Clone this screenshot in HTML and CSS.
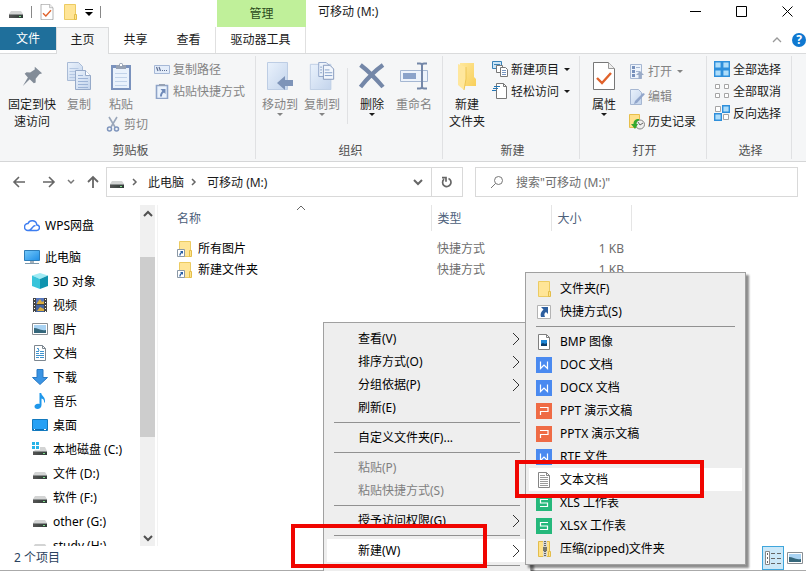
FILE: index.html
```html
<!DOCTYPE html>
<html lang="zh-CN">
<head>
<meta charset="UTF-8" />
<meta name="viewport" content="width=device-width, initial-scale=1" />
<title>可移动 (M:)</title>
<link rel="stylesheet" href="styles.css">
</head>
<body>

<!-- Ícones compartilhados -->
<svg class="sprite" aria-hidden="true">
  <defs>
    <linearGradient id="gPaper" x1="0" y1="0" x2="1" y2="1"><stop offset="0" stop-color="#eaf2fc"/><stop offset="1" stop-color="#c3d4ec"/></linearGradient>
    <linearGradient id="gFolder" x1="0" y1="0" x2="1" y2="1"><stop offset="0" stop-color="#ffe89b"/><stop offset="1" stop-color="#f8cf5a"/></linearGradient>
    <linearGradient id="gScreen" x1="0" y1="0" x2="1" y2="1"><stop offset="0" stop-color="#74c9fb"/><stop offset="1" stop-color="#1e8ee6"/></linearGradient>
    <linearGradient id="gDrive" x1="0" y1="0" x2="1" y2="0"><stop offset="0" stop-color="#555"/><stop offset="1" stop-color="#2f3a36"/></linearGradient>
  </defs>
  <symbol id="drive" viewBox="0 0 16 16">
    <path d="M3 7h10l2 3H1z" fill="#d3d4d4"/>
    <path d="M1 10h14v4H1z" fill="url(#gDrive)"/>
    <path d="M1 10h14v1H1z" fill="#8c9090"/>
    <path d="M11 12h2v1h-2z" fill="#7fe08c"/>
  </symbol>
  <symbol id="drive-c" viewBox="0 0 16 16">
    <path d="M0 1h3v3H0zM4 1h3v3H4zM0 5h3v3H0zM4 5h3v3H4z" fill="#28b4e8"/>
    <path d="M8 6h5l2 4H2l1-1h5z" fill="#d3d4d4"/>
    <path d="M1 10h14v4H1z" fill="url(#gDrive)"/>
    <path d="M1 10h14v1H1z" fill="#8c9090"/>
    <path d="M11 12h2v1h-2z" fill="#7fe08c"/>
  </symbol>
  <symbol id="folder" viewBox="0 0 16 16">
    <path d="M2.500.5h11v15h-11z" fill="#ffe597" stroke="#eccb62"/>
    <path d="M12.500 10.500h2v5h-2z" fill="#ffe48a" stroke="#e3bd4b"/>
  </symbol>
  <symbol id="folder-link" viewBox="0 0 16 16">
    <path d="M2.500.5h11v15h-11z" fill="#ffe597" stroke="#eccb62"/>
    <path d="M12.500 9.500h2v6h-2z" fill="#ffe48a" stroke="#e3bd4b"/>
    <path d="M.5 8.500h7v7h-7z" fill="#fff" stroke="#8b98a5"/>
    <path d="M3 10h3v3L5 12c-1 .6-1.400 1.200-1.400 2.500H2.300C2.300 13 3 12 4 11z" fill="#285fa5"/>
  </symbol>
  <symbol id="check-page" viewBox="0 0 22 28">
    <path d="M.5.500h15l6 6v21H.5z" fill="#fff" stroke="#777"/>
    <path d="M15.500.5v6h6" fill="#eee" stroke="#999"/>
    <path d="M4 16l5 5 9-10" fill="none" stroke="#e0622b" stroke-width="2.400"/>
  </symbol>
  <symbol id="pin" viewBox="0 0 24 24">
    <path d="M15 2l8 7-3 1-4 5v4l-2 1-4.500-4.500L2 23l5.500-9.500L4 9.500 6 8l4 .3L15 5z" fill="#828c98"/>
  </symbol>
  <symbol id="copy" viewBox="0 0 24 28">
    <path d="M.5.500h11l4 4v14H.5z" fill="url(#gPaper)" stroke="#a9bbd6"/>
    <path d="M2.500 6.500h9M2.500 9.500h9M2.500 12.500h9M2.500 15.500h9" stroke="#b5c8e3"/>
    <path d="M8.500 8.500h10l5 5v14h-15z" fill="url(#gPaper)" stroke="#96aac9"/>
    <path d="M18.500 8.500v5h5" fill="#fff" stroke="#96aac9"/>
    <path d="M11 13.500h5M11 16.500h10M11 19.500h10M11 22.500h10M11 25.500h10" stroke="#9db4d7"/>
  </symbol>
  <symbol id="paste" viewBox="0 0 20 28">
    <path d="M0 3h20v25H0z" fill="#7a92bd"/>
    <path d="M2 6h16v20H2z" fill="#eaf2fc"/>
    <path d="M4 11.500h12M4 15.500h12M4 19.500h12M4 23.500h12" stroke="#c2d3ea"/>
    <path d="M5 7V3h3a2 2 0 0 1 4 0h3v4z" fill="#97a2b4"/>
    <path d="M9 2h2v2H9z" fill="#fff"/>
  </symbol>
  <symbol id="cut" viewBox="0 0 16 16">
    <path d="M4 1l6 10M12 1L6 11" stroke="#9aa7ba" stroke-width="1.600" fill="none"/>
    <circle cx="4.500" cy="13" r="2" fill="none" stroke="#7f95bd" stroke-width="1.500"/>
    <circle cx="11.500" cy="13" r="2" fill="none" stroke="#7f95bd" stroke-width="1.500"/>
  </symbol>
  <symbol id="path" viewBox="0 0 16 16">
    <path d="M.5 4.500h15v8H.5z" fill="#e4edfa" stroke="#a6b8d6"/>
    <path d="M2.500 6l1.500 4M5 6l1.500 4" stroke="#5d6e92" stroke-width="1.200"/>
    <path d="M8 9h1v1H8zM10 9h1v1h-1zM12 9h1v1h-1z" fill="#5d6e92"/>
  </symbol>
  <symbol id="paste-link" viewBox="0 0 16 16">
    <path d="M2.500 2.500h11v13h-11z" fill="#eaf2fc" stroke="#8ea3c8" stroke-width="1.600"/>
    <path d="M5 3V1h6v2z" fill="#97a2b4"/>
    <path d="M6.500 6H11.500v5L10 9.500c-1.600.8-2 2-2 4H6C6 11 6.800 9.500 8.300 8z" fill="#6f89b7"/>
  </symbol>
  <symbol id="move-to" viewBox="0 0 28 28">
    <path d="M1.500.5h20v27h-20z" fill="url(#gPaper)" stroke="#bdcde4"/>
    <path d="M11 21l8-7v4h8v6h-8v4z" fill="#7e94b8"/>
  </symbol>
  <symbol id="copy-to" viewBox="0 0 28 30">
    <path d="M1.500 2.500h22v27h-22z" fill="url(#gPaper)" stroke="#bdcde4"/>
    <path d="M10.500.5h8l3 3v12h-11z" fill="#edf3fb" stroke="#8da3c7"/>
    <path d="M15.500 3.500h7l4 4v11h-11z" fill="#f2f6fc" stroke="#8196b9"/>
    <path d="M12 5.500h2M12 8.500h2M12 11.500h2M17 8.500h5M17 11.500h8M17 14.500h8" stroke="#829dc7"/>
  </symbol>
  <symbol id="delete" viewBox="0 0 28 28">
    <path d="M2.500 3C9 8 19 18 25 25M25 3C18 8 8 18 2.500 25" stroke="#7487a8" stroke-width="4.200" fill="none"/>
  </symbol>
  <symbol id="rename" viewBox="0 0 28 28">
    <path d="M.5 8.500h27v11H.5z" fill="#edf3fb" stroke="#a5b7d2"/>
    <path d="M3 11h13v6H3z" fill="#8ba3ca"/>
    <path d="M17 1.500h3q2 0 2 2v21q0 2-2 2h-3M27 1.500h-3q-2 0-2 2v21q0 2 2 2h3" fill="none" stroke="#7487a8" stroke-width="2"/>
  </symbol>
  <symbol id="new-folder" viewBox="0 0 20 28">
    <path d="M3 1h14v14l2 2v7H3z" fill="url(#gFolder)"/>
    <path d="M1 2l8 3v12l-2 11-6-5z" fill="#ffe79d"/>
    <path d="M9 5v12l-2 11" fill="none" stroke="#edc655"/>
  </symbol>
  <symbol id="new-item" viewBox="0 0 16 16">
    <path d="M.5.500h9v7h-9z" fill="#cbe6f8" stroke="#3a83b8"/>
    <path d="M2 3h6v1H2z" fill="#3a83b8"/>
    <path d="M4.500 4.500h6v7h-6z" fill="#fff" stroke="#777"/>
    <path d="M8.500 6.500h5l2 2v7h-7z" fill="#fff" stroke="#777"/>
    <path d="M10 9.500h4M10 11.500h4M10 13.500h4" stroke="#7795c0"/>
  </symbol>
  <symbol id="easy" viewBox="0 0 16 16">
    <path d="M4.500.5h7l3 3v12h-10z" fill="#fff" stroke="#777"/>
    <path d="M11.500.5v3h3" fill="none" stroke="#777"/>
    <path d="M2 3.500h6M1 5.500h5M0 7.500h4" stroke="#2577b5"/>
  </symbol>
  <symbol id="open" viewBox="0 0 16 16">
    <path d="M1.500.5h11v14h-11z" fill="#edf3fb" stroke="#a6b7d2"/>
    <path d="M3 2h3v3H3zM3 6h3v3H3zM3 10h3v3H3z" fill="#7790bb"/>
    <path d="M7 3.500h4M7 7.500h4" stroke="#a6b7d2"/>
    <path d="M11 7l4 4h-2.500v4h-3v-4H7z" fill="#9aabc8"/>
  </symbol>
  <symbol id="edit" viewBox="0 0 16 16">
    <path d="M1.500.5h8l3 3v12h-11z" fill="url(#gPaper)" stroke="#a6b7d2"/>
    <path d="M14 4l2 1-8 9-3 1 1-3z" fill="#91a6cb"/>
  </symbol>
  <symbol id="history" viewBox="0 0 16 16">
    <path d="M.5.500h10v13H.5z" fill="#ffe08a" stroke="#e7bf4b"/>
    <circle cx="11" cy="10.500" r="4.500" fill="#eee" stroke="#858585"/>
    <path d="M9 8l2 3 3-2" fill="none" stroke="#666"/>
    <path d="M10 5C6 5 4.500 7 4.500 10H2l4 5 3-5H7.500c0-2 .7-3 2.500-3.500z" fill="#35a82f"/>
  </symbol>
  <symbol id="sel-all" viewBox="0 0 16 16">
    <path d="M.7.700h6.600v6.600H.7zM8.700.700h6.600v6.600H8.700zM.7 8.700h6.600v6.600H.7zM8.700 8.700h6.600v6.600H8.700z" fill="#aeddfa" stroke="#2e8fdb" stroke-width="1.400"/>
  </symbol>
  <symbol id="sel-none" viewBox="0 0 16 16">
    <path d="M1.500 1.500h4v4h-4zM10.500 1.500h4v4h-4zM1.500 10.500h4v4h-4zM10.500 10.500h4v4h-4z" fill="#fff" stroke="#a5a5a5"/>
  </symbol>
  <symbol id="sel-inv" viewBox="0 0 16 16">
    <path d="M1.500 1.500h5v5h-5zM9.500 9.500h5v5h-5z" fill="#fff" stroke="#a5a5a5"/>
    <path d="M8.700.700h6.600v6.600H8.700zM.7 8.700h6.600v6.600H.7z" fill="#aeddfa" stroke="#2e8fdb" stroke-width="1.400"/>
  </symbol>
  <symbol id="cloud" viewBox="0 0 16 16">
    <path d="M4 13.500h8.500a2.800 2.800 0 0 0 .3-5.600A4.600 4.600 0 0 0 4 6.500a3.500 3.500 0 0 0 0 7c2 0 3-1 4-2.500s1.600-2.500 3.500-2.500" fill="none" stroke="#3d7df0" stroke-width="1.500"/>
  </symbol>
  <symbol id="pc" viewBox="0 0 16 16">
    <path d="M.5 1.500h15v10H.5z" fill="url(#gScreen)" stroke="#2d7db8"/>
    <path d="M6 12h4v2H6z" fill="#a5b1ba"/><path d="M1 14h14v1H1z" fill="#7c98ac"/>
  </symbol>
  <symbol id="cube" viewBox="0 0 16 16">
    <path d="M8 0l8 2.500L8 6 0 2.500z" fill="#a1ebf4"/>
    <path d="M0 2.500L8 6v10l-8-3z" fill="#38c4da"/>
    <path d="M16 2.500L8 6v10l8-3z" fill="#0f93ae"/>
  </symbol>
  <symbol id="video" viewBox="0 0 16 16">
    <path d="M1 1h14v14H1z" fill="#444"/>
    <path d="M4 1h8v6H4z" fill="#5776bd"/><path d="M4 8h8v7H4z" fill="#43639f"/>
    <path d="M5 6l3-4 2 3 2-1v3H5zM5 14l3-4 4 2v2z" fill="#d8ab3e"/>
    <path d="M2.500 2v13M13.500 2v13" stroke="#fff" stroke-dasharray="1 2"/>
  </symbol>
  <symbol id="picture" viewBox="0 0 16 16">
    <path d="M.5 2.500h15v11H.5z" fill="#fff" stroke="#8a8f94"/>
    <path d="M2 4h12v8H2z" fill="#a9d3f3"/>
    <path d="M2 7c4 0 6 3 12 2v3H2z" fill="#35677b"/>
  </symbol>
  <symbol id="doc" viewBox="0 0 16 16">
    <path d="M2.500.5h8l3 3v12h-11z" fill="#fff" stroke="#7d8790"/>
    <path d="M10.500.5v3h3" fill="none" stroke="#7d8790"/>
    <path d="M4 6.500h3M4 8.500h3M8 6.500h4M8 8.500h4M4 10.500h8M4 12.500h3M8 12.500h4" stroke="#3e93ce"/>
    <path d="M5 4l1-1 1 3" stroke="#3e93ce" fill="none"/>
  </symbol>
  <symbol id="down" viewBox="0 0 16 16">
    <path d="M5 .5h6v8h4.500L8 15.500.5 8.500H5z" fill="#3a94e4" stroke="#2979c4"/>
  </symbol>
  <symbol id="music" viewBox="0 0 16 16">
    <path d="M7.500 0h1.700c.3 3 4.300 4 3.800 8.500-.1.700-.7 1.500-1 1.500.3-3-.5-4-2.500-4.500V12c0 2.500-2 4-4 4s-3-1-3-2.500S4.500 10 7.500 11z" fill="#1f97ea"/>
  </symbol>
  <symbol id="desktop" viewBox="0 0 16 16">
    <path d="M.5 2.500h15v11H.5z" fill="#27a1f5" stroke="#1379be"/>
    <path d="M1 12.500h14" stroke="#0b6db5"/><path d="M2 12h1v1H2zM12 12h2v1h-2z" fill="#fff"/>
  </symbol>
  <symbol id="shortcut" viewBox="0 0 16 16">
    <path d="M1.500 1.500h13v13h-13z" fill="#fff" stroke="#b3b3b3"/>
    <path d="M5 3h7v7l-2-2c-2 1-2 3-1 5H5c-1-3 0-5 2.500-7.500z" fill="#2d5f9f"/>
  </symbol>
  <symbol id="bmp" viewBox="0 0 16 16">
    <path d="M2.500.5h8l3 3v12h-11z" fill="#fff" stroke="#7f7f7f"/>
    <path d="M10.500.5v3h3" fill="none" stroke="#7f7f7f"/>
    <path d="M5 6h6v6H5z" fill="#1f86d5"/><path d="M5 10l2-1 2 1 2-1v3H5z" fill="#0c3e6c"/>
  </symbol>
  <symbol id="wps-w" viewBox="0 0 16 16">
    <path d="M0 0h16v16H0z" fill="#4a8af0"/>
    <path d="M4.500 4.500v7L8 8l3.500 3.500v-7" fill="none" stroke="#fff" stroke-width="1.200"/>
  </symbol>
  <symbol id="wps-p" viewBox="0 0 16 16">
    <path d="M0 0h16v16H0z" fill="#ef6b45"/>
    <path d="M4 4.500h8v4H4.500v3.500" fill="none" stroke="#fff" stroke-width="1.200"/>
  </symbol>
  <symbol id="wps-s" viewBox="0 0 16 16">
    <path d="M0 0h16v16H0z" fill="#25b87b"/>
    <path d="M12 4.500H4.500V8h7v3.500H4" fill="none" stroke="#fff" stroke-width="1.200"/>
  </symbol>
  <symbol id="txt" viewBox="0 0 16 16">
    <path d="M2.500.5h8l3 3v12h-11z" fill="#fff" stroke="#858585"/>
    <path d="M10.500.5v3h3" fill="none" stroke="#858585"/>
    <path d="M4 3.500h5M4 5.500h8M4 7.500h8M4 9.500h8M4 11.500h8M4 13.500h8" stroke="#9a9a9a"/>
  </symbol>
  <symbol id="zip" viewBox="0 0 16 16">
    <path d="M2.500.5h11v15h-11z" fill="#ffe28c" stroke="#e3bd4b"/>
    <path d="M12.500 10.500h2v5h-2z" fill="#ffe48a" stroke="#e3bd4b"/>
    <path d="M7 0h4v16H7z" fill="#d7d7d2"/>
    <path d="M9 0v16" stroke="#666" stroke-width="2" stroke-dasharray="1 1"/>
    <path d="M7 6h4v4H7z" fill="#77776d"/>
  </symbol>
  <symbol id="more" viewBox="0 0 8 14"><path d="M1 1l6 6-6 6" fill="none" stroke="#333"/></symbol>
  <symbol id="chev-down" viewBox="0 0 10 10"><path d="M1 3l4 4 4-4" fill="none" stroke="currentColor" stroke-width="2"/></symbol>
  <symbol id="chev-up" viewBox="0 0 10 10"><path d="M1 7l4-4 4 4" fill="none" stroke="currentColor" stroke-width="2"/></symbol>
  <symbol id="chev-right" viewBox="0 0 10 10"><path d="M3 2l3 3-3 3" fill="none" stroke="#666" stroke-width="1.500"/></symbol>
</svg>

<div class="window">
  <!-- Barra de título -->
  <header class="titlebar">
    <div class="quick">
      <svg class="icon"><use href="#drive"/></svg>
      <span class="quick-sep"></span>
      <button class="bare" aria-label="属性"><svg class="icon"><use href="#check-page"/></svg></button>
      <button class="bare" aria-label="新建文件夹"><svg class="icon"><use href="#folder"/></svg></button>
      <button class="bare" aria-label="自定义快速访问工具栏"><svg class="quick-drop" viewBox="0 0 8 8"><path d="M0 1.500h8" stroke="#000"/><path d="M0 4h8L4 8z"/></svg></button>
      <span class="quick-sep"></span>
    </div>
    <div class="manage">管理</div>
    <div class="title">可移动 (M:)</div>
    <div class="controls">
      <button class="bare" aria-label="最小化"><svg class="ctl" viewBox="0 0 11 11"><path d="M0 5.500h11" stroke="#000"/></svg></button>
      <button class="bare" aria-label="最大化"><svg class="ctl" viewBox="0 0 11 11"><path d="M.5.500h10v10H.5z" fill="none" stroke="#000"/></svg></button>
      <button class="bare" aria-label="关闭"><svg class="ctl" viewBox="0 0 11 11"><path d="M.5.500l10 10M10.500.5l-10 10" stroke="#000"/></svg></button>
    </div>
  </header>

  <nav class="tabs">
    <button class="tab tab-file">文件</button>
    <button class="tab active">主页</button>
    <button class="tab">共享</button>
    <button class="tab">查看</button>
    <button class="tab tab-drive">驱动器工具</button>
    <div class="tabs-right">
      <button class="bare collapse" aria-label="折叠"><svg class="chev" viewBox="0 0 10 10"><path d="M1 7l4-4 4 4" fill="none" stroke="#999" stroke-width="1.300"/></svg></button>
      <button class="help" aria-label="帮助">?</button>
    </div>
  </nav>

  <!-- Faixa de opções -->
  <section class="ribbon">
    <div class="group group-clip">
      <div class="group-body">
        <button class="big pin"><svg class="big-icon"><use href="#pin"/></svg><span>固定到快<br>速访问</span></button>
        <button class="big off"><svg class="big-icon"><use href="#copy"/></svg>复制</button>
        <div class="paste-col">
          <button class="big off"><svg class="big-icon"><use href="#paste"/></svg>粘贴</button>
          <button class="small off"><svg class="icon"><use href="#cut"/></svg>剪切</button>
        </div>
        <div class="stack">
          <button class="small off"><svg class="icon"><use href="#path"/></svg>复制路径</button>
          <button class="small off"><svg class="icon"><use href="#paste-link"/></svg>粘贴快捷方式</button>
        </div>
      </div>
      <div class="group-name">剪贴板</div>
    </div>
    <div class="group group-org">
      <div class="group-body">
        <button class="big off"><svg class="big-icon"><use href="#move-to"/></svg>移动到<span class="drop"></span></button>
        <button class="big off"><svg class="big-icon"><use href="#copy-to"/></svg>复制到<span class="drop"></span></button>
        <span class="inner-sep"></span>
        <button class="big"><svg class="big-icon"><use href="#delete"/></svg>删除<span class="drop"></span></button>
        <button class="big off"><svg class="big-icon"><use href="#rename"/></svg>重命名</button>
      </div>
      <div class="group-name">组织</div>
    </div>
    <div class="group group-new">
      <div class="group-body">
        <button class="big"><svg class="big-icon"><use href="#new-folder"/></svg><span>新建<br>文件夹</span></button>
        <div class="stack">
          <button class="small"><svg class="icon"><use href="#new-item"/></svg>新建项目<span class="drop"></span></button>
          <button class="small"><svg class="icon"><use href="#easy"/></svg>轻松访问<span class="drop"></span></button>
        </div>
      </div>
      <div class="group-name">新建</div>
    </div>
    <div class="group group-open">
      <div class="group-body">
        <button class="big"><svg class="big-icon"><use href="#check-page"/></svg>属性<span class="drop"></span></button>
        <div class="stack loose">
          <button class="small off"><svg class="icon"><use href="#open"/></svg>打开<span class="drop"></span></button>
          <button class="small off"><svg class="icon"><use href="#edit"/></svg>编辑</button>
          <button class="small"><svg class="icon"><use href="#history"/></svg>历史记录</button>
        </div>
      </div>
      <div class="group-name">打开</div>
    </div>
    <div class="group group-select">
      <div class="group-body">
        <div class="stack">
          <button class="small"><svg class="icon"><use href="#sel-all"/></svg>全部选择</button>
          <button class="small"><svg class="icon"><use href="#sel-none"/></svg>全部取消</button>
          <button class="small"><svg class="icon"><use href="#sel-inv"/></svg>反向选择</button>
        </div>
      </div>
      <div class="group-name">选择</div>
    </div>
  </section>

  <!-- Barra de endereço -->
  <div class="addressbar">
    <div class="nav-buttons">
      <button class="bare" aria-label="后退"><svg class="nav-arrow" viewBox="0 0 14 14"><path d="M13 7H2M7 2L2 7l5 5" fill="none" stroke="#666" stroke-width="1.600"/></svg></button>
      <button class="bare" aria-label="前进"><svg class="nav-arrow" viewBox="0 0 14 14"><path d="M1 7h11M7 2l5 5-5 5" fill="none" stroke="#666" stroke-width="1.600"/></svg></button>
      <button class="bare" aria-label="最近"><svg class="nav-small" viewBox="0 0 8 8"><path d="M1 2l3 3 3-3" fill="none" stroke="#777" stroke-width="1.500"/></svg></button>
      <button class="bare" aria-label="向上"><svg class="nav-arrow" viewBox="0 0 14 14"><path d="M7 13V2M2 7l5-5 5 5" fill="none" stroke="#666" stroke-width="1.800"/></svg></button>
    </div>
    <div class="address">
      <svg class="icon"><use href="#drive"/></svg>
      <svg class="chev"><use href="#chev-right"/></svg>
      <button class="bare">此电脑</button>
      <svg class="chev"><use href="#chev-right"/></svg>
      <button class="bare">可移动 (M:)</button>
      <button class="bare history-drop" aria-label="以前的位置"><svg class="chev"><use href="#chev-down"/></svg></button>
      <button class="refresh" aria-label="刷新"><svg class="refresh-icon" viewBox="0 0 12 12"><path d="M7.500 2.500a4.200 4.200 0 1 1-4.500.7M1 1.700h4v4" fill="none" stroke="#666" stroke-width="1.700"/></svg></button>
    </div>
    <div class="search">
      <svg class="search-icon" viewBox="0 0 14 14"><circle cx="8.500" cy="5.500" r="4" fill="none" stroke="#777"/><path d="M5.500 8.500L1 13" stroke="#777"/></svg>
      <input type="text" aria-label="搜索" placeholder='搜索"可移动 (M:)"'>
    </div>
  </div>

  <div class="content">
    <aside class="tree">
      <a href="#" class="node root cloud"><svg class="icon"><use href="#cloud"/></svg>WPS网盘</a>
      <a href="#" class="node root"><svg class="icon"><use href="#pc"/></svg>此电脑</a>
      <a href="#" class="node"><svg class="icon"><use href="#cube"/></svg>3D 对象</a>
      <a href="#" class="node"><svg class="icon"><use href="#video"/></svg>视频</a>
      <a href="#" class="node"><svg class="icon"><use href="#picture"/></svg>图片</a>
      <a href="#" class="node"><svg class="icon"><use href="#doc"/></svg>文档</a>
      <a href="#" class="node"><svg class="icon"><use href="#down"/></svg>下载</a>
      <a href="#" class="node"><svg class="icon"><use href="#music"/></svg>音乐</a>
      <a href="#" class="node"><svg class="icon"><use href="#desktop"/></svg>桌面</a>
      <a href="#" class="node"><svg class="icon"><use href="#drive-c"/></svg>本地磁盘 (C:)</a>
      <a href="#" class="node"><svg class="icon"><use href="#drive"/></svg>文件 (D:)</a>
      <a href="#" class="node"><svg class="icon"><use href="#drive"/></svg>软件 (F:)</a>
      <a href="#" class="node"><svg class="icon"><use href="#drive"/></svg>other (G:)</a>
      <a href="#" class="node"><svg class="icon"><use href="#drive"/></svg>study (H:)</a>
    </aside>
    <div class="scrollbar">
      <button class="bare" aria-label="向上滚动"><svg class="chev"><use href="#chev-up"/></svg></button>
      <div class="track"><div class="thumb"></div></div>
      <button class="bare" aria-label="向下滚动"><svg class="chev"><use href="#chev-down"/></svg></button>
    </div>
    <main class="files">
      <table>
        <thead>
          <tr>
            <th class="col-name">名称<svg class="sort" viewBox="0 0 10 10"><path d="M1 7l4-4 4 4" fill="none" stroke="#666"/></svg></th>
            <th class="col-type">类型</th>
            <th class="col-size">大小</th>
          </tr>
        </thead>
        <tbody>
          <tr><td class="name"><svg class="icon"><use href="#folder-link"/></svg>所有图片</td><td>快捷方式</td><td class="size">1 KB</td></tr>
          <tr><td class="name"><svg class="icon"><use href="#folder-link"/></svg>新建文件夹</td><td>快捷方式</td><td class="size">1 KB</td></tr>
        </tbody>
      </table>
    </main>
  </div>

  <footer class="statusbar">
    <span class="count">2 个项目</span>
    <div class="views">
      <button class="view active" aria-label="详细信息"><svg class="icon" viewBox="0 0 16 16"><path d="M.5 1.500h4v13h-4z" fill="#fff" stroke="#888"/><path d="M2 3h1v2H2zM2 7h1v2H2zM2 11h1v2H2z" fill="#666"/><path d="M6 3.500h4M12 3.500h4M6 8.500h4M12 8.500h4M6 13.500h4M12 13.500h4" stroke="#666"/></svg></button>
      <button class="view" aria-label="大图标"><svg class="icon"><use href="#picture"/></svg></button>
    </div>
  </footer>
</div>

<!-- Menu de contexto -->
<div class="menu menu-main">
  <button class="item">查看(V)<svg class="more"><use href="#more"/></svg></button>
  <button class="item">排序方式(O)<svg class="more"><use href="#more"/></svg></button>
  <button class="item">分组依据(P)<svg class="more"><use href="#more"/></svg></button>
  <button class="item">刷新(E)</button>
  <hr>
  <button class="item">自定义文件夹(F)...</button>
  <hr>
  <button class="item off">粘贴(P)</button>
  <button class="item off">粘贴快捷方式(S)</button>
  <hr>
  <button class="item">授予访问权限(G)<svg class="more"><use href="#more"/></svg></button>
  <hr>
  <button class="item hover">新建(W)<svg class="more"><use href="#more"/></svg></button>
  <hr>
</div>

<div class="menu menu-new">
  <button class="item"><svg class="icon"><use href="#folder"/></svg>文件夹(F)</button>
  <button class="item"><svg class="icon"><use href="#shortcut"/></svg>快捷方式(S)</button>
  <hr>
  <button class="item"><svg class="icon"><use href="#bmp"/></svg>BMP 图像</button>
  <button class="item"><svg class="icon"><use href="#wps-w"/></svg>DOC 文档</button>
  <button class="item"><svg class="icon"><use href="#wps-w"/></svg>DOCX 文档</button>
  <button class="item"><svg class="icon"><use href="#wps-p"/></svg>PPT 演示文稿</button>
  <button class="item"><svg class="icon"><use href="#wps-p"/></svg>PPTX 演示文稿</button>
  <button class="item"><svg class="icon"><use href="#wps-w"/></svg>RTF 文件</button>
  <button class="item hover"><svg class="icon"><use href="#txt"/></svg>文本文档</button>
  <button class="item"><svg class="icon"><use href="#wps-s"/></svg>XLS 工作表</button>
  <button class="item"><svg class="icon"><use href="#wps-s"/></svg>XLSX 工作表</button>
  <button class="item"><svg class="icon"><use href="#zip"/></svg>压缩(zipped)文件夹</button>
</div>

<!-- Marcações em vermelho -->
<div class="mark mark-new"></div>
<div class="mark mark-txt"></div>

</body>
</html>
```
FILE: styles.css
```css
* {
  box-sizing: border-box;
}
body {
  margin: 0;
  height: 100vh;
  overflow: hidden;
  position: relative;
  font-family: "Noto Sans", "Noto Sans CJK SC", sans-serif;
  font-size: 12px;
  line-height: 17px;
  color: #1a1a1a;
  background: #fff;
}
button, input {
  font: inherit;
  color: inherit;
  border: none;
  background: none;
  padding: 0;
  margin: 0;
  white-space: nowrap;
}
svg {
  display: block;
  flex: none;
}
.sprite {
  position: absolute;
  width: 0;
  height: 0;
}
.icon {
  width: 16px;
  height: 16px;
}
.chev {
  width: 10px;
  height: 10px;
}
.window {
  height: 100%;
  display: flex;
  flex-direction: column;
  border-bottom: 1px solid #aaa;
}

/* Barra de título */
.titlebar {
  display: flex;
  height: 27px;
  flex: none;
}
.quick {
  width: 217px;
  display: flex;
  align-items: center;
  padding: 0 0 3px 8px;
  gap: 7px;
}
.quick-sep {
  width: 1px;
  height: 12px;
  background: #888;
}
.quick-drop {
  width: 8px;
  height: 8px;
}
.manage {
  width: 89px;
  background: #c0f09a;
  text-align: center;
  line-height: 27px;
  color: #2c4a1c;
}
.title {
  padding-left: 12px;
  line-height: 24px;
  flex: 1;
}
.controls {
  display: flex;
  margin-right: -4px;
}
.controls button {
  width: 46px;
  height: 23px;
  display: flex;
  align-items: center;
  justify-content: center;
}
.ctl {
  width: 11px;
  height: 11px;
}

/* Abas */
.tabs {
  display: flex;
  height: 27px;
  flex: none;
  border-bottom: 1px solid #dadbdc;
}
.tab {
  width: 53px;
  height: 26px;
  padding-bottom: 2px;
}
.tab-file {
  width: 56px;
  height: 23px;
  padding: 0;
  background: #1f6f9b;
  color: #fff;
}
.tab.active {
  height: 27px;
  padding-bottom: 4px;
  background: #f5f6f7;
  border: 1px solid #dadbdc;
  border-bottom: none;
}
.tab-drive {
  width: 91px;
  border-left: 1px solid #e0e0e0;
  border-right: 1px solid #e0e0e0;
}
.tabs-right {
  margin-left: auto;
  display: flex;
  align-items: center;
  gap: 10px;
}
.help {
  width: 14px;
  height: 14px;
  border-radius: 50%;
  background: #0f78d0;
  color: #fff;
  font-weight: bold;
  line-height: 14px;
}

/* Faixa de opções */
.ribbon {
  display: flex;
  height: 108px;
  flex: none;
  padding: 2px 0;
  background: #f5f6f7;
  border-bottom: 1px solid #d5d6d7;
}
.group {
  display: flex;
  flex-direction: column;
  justify-content: space-between;
  padding-left: 3px;
  border-right: 1px solid #e0e1e3;
}
.group-clip {
  width: 256px;
  padding-left: 6px;
}
.group-org {
  width: 187px;
}
.group-new {
  width: 137px;
}
.group-open {
  width: 127px;
}
.group-select {
  width: 85px;
}
.group-body {
  display: flex;
}
.group-name {
  text-align: center;
  color: #505050;
}
.big {
  display: flex;
  flex-direction: column;
  align-items: center;
  width: 42px;
  padding-top: 6px;
  align-self: flex-start;
}
.big.pin {
  width: 52px;
}
.big-icon {
  width: 28px;
  height: 28px;
  margin-bottom: 6px;
}
.pin .big-icon {
  padding: 3px;
}
.off {
  color: #848484;
}
.drop {
  border: 3px solid transparent;
  border-top-color: currentColor;
  border-bottom: none;
}
.small {
  display: flex;
  align-items: center;
  gap: 3px;
  height: 22px;
}
.small .drop {
  margin-left: 2px;
}
.paste-col {
  width: 42px;
}
.paste-col .small {
  padding-left: 5px;
}
.stack {
  padding: 2px 0 0 4px;
}
.group-clip .stack {
  padding-left: 12px;
}
.stack.loose {
  padding-top: 3px;
}
.stack.loose .small {
  height: 25px;
}
.inner-sep {
  width: 1px;
  height: 56px;
  margin: 12px 3px 0 4px;
  background: #e0e1e3;
}

/* Endereço */
.addressbar {
  display: grid;
  grid-template-columns: 106px minmax(0, 21fr) 12px minmax(0, 19fr);
  flex: none;
  height: 42px;
  padding: 5px 8px 7px 0;
}
.nav-buttons {
  display: flex;
  align-items: center;
  gap: 11px;
  padding-left: 12px;
}
.nav-buttons button:first-child {
  margin-right: 5px;
}
.nav-arrow {
  width: 14px;
  height: 14px;
}
.nav-small {
  width: 8px;
  height: 8px;
}
.address {
  display: flex;
  align-items: center;
  border: 1px solid #d9d9d9;
  padding-left: 2px;
}
.address .chev {
  margin: 0 8px 0 5px;
}
.address .history-drop {
  margin-left: auto;
  color: #666;
}
.refresh {
  width: 31px;
  align-self: stretch;
  border-left: 1px solid #d9d9d9;
  display: flex;
  align-items: center;
  justify-content: center;
}
.refresh-icon {
  width: 12px;
  height: 12px;
}
.search {
  grid-column: 4;
  display: flex;
  align-items: center;
  border: 1px solid #d9d9d9;
  padding-left: 14px;
  gap: 12px;
}
.search-icon {
  width: 14px;
  height: 14px;
}
.search input {
  flex: 1;
  min-width: 0;
  outline: none;
}
.search input::placeholder {
  color: #6d6d6d;
  opacity: 1;
}

/* Conteúdo */
.content {
  flex: 1;
  min-height: 0;
  display: flex;
  padding-top: 1px;
}
.tree {
  width: 140px;
  padding-top: 8px;
  overflow: hidden;
}
.node {
  display: flex;
  align-items: center;
  gap: 5px;
  height: 24px;
  padding-left: 32px;
  color: #000;
  text-decoration: none;
  white-space: nowrap;
}
.node.root {
  padding-left: 24px;
}
.node.cloud {
  margin-bottom: 8px;
}
.scrollbar {
  width: 15px;
  background: #f0f0f0;
  display: flex;
  flex-direction: column;
  align-items: center;
  color: #505050;
}
.scrollbar button {
  height: 17px;
}
.track {
  flex: 1;
  width: 100%;
  padding-top: 35px;
}
.thumb {
  height: 66%;
  max-height: 180px;
  background: #cdcdcd;
}
.files {
  flex: 1;
  margin-left: 2px;
  padding-left: 13px;
  border-left: 1px solid #f3f3f3;
}
table {
  border-collapse: collapse;
  table-layout: fixed;
  width: 460px;
}
th {
  height: 26px;
  padding: 0 0 0 6px;
  text-align: left;
  font-weight: normal;
  color: #4c607a;
  border-right: 1px solid #e5e5e5;
}
.col-name {
  position: relative;
  width: 260px;
}
.sort {
  position: absolute;
  top: -2px;
  left: 48%;
  width: 10px;
  height: 10px;
}
.col-type {
  width: 120px;
}
.col-size {
  width: 80px;
}
tbody::before {
  content: "";
  display: block;
  height: 7px;
}
td {
  height: 21px;
  padding: 0 7px 0 6px;
  color: #6d6d6d;
}
td.name {
  display: flex;
  align-items: center;
  gap: 5px;
  color: #000;
}
td.size {
  text-align: right;
}

/* Barra de status */
.statusbar {
  height: 24px;
  flex: none;
  display: flex;
  justify-content: space-between;
  padding-left: 14px;
  color: #2c4360;
}
.count {
  line-height: 24px;
}
.views {
  display: flex;
}
.view {
  width: 22px;
  display: flex;
  align-items: center;
  justify-content: center;
}
.view.active {
  background: #cce8f8;
  border: 1px solid #3fa6dc;
}

/* Menus */
.menu {
  position: absolute;
  padding: 4px 3px;
  background: #eee;
  border: 1px solid #a0a0a0;
  box-shadow: 3px 3px 2px rgba(0, 0, 0, 0.45);
  color: #000;
}
.menu-main {
  left: 323px;
  top: 322px;
  width: 208px;
}
.menu-new {
  left: 525px;
  top: 272px;
  width: 221px;
}
.item {
  display: flex;
  align-items: center;
  width: 100%;
  height: 23px;
  gap: 8px;
  padding: 0 6px 0 7px;
}
.menu-main .item {
  padding: 0 7px 0 31px;
}
.item.hover {
  background: #fff;
}
.item.off {
  color: #808080;
}
.more {
  width: 8px;
  height: 14px;
  margin-left: auto;
}
hr {
  height: 1px;
  margin: 3px 7px;
  border: none;
  background: #919191;
}

/* Marcações */
.mark {
  position: absolute;
  border: 4px solid #f00500;
}
.mark-new {
  left: 291px;
  top: 524px;
  width: 196px;
  height: 44px;
}
.mark-txt {
  left: 515px;
  top: 460px;
  width: 189px;
  height: 38px;
}
```
